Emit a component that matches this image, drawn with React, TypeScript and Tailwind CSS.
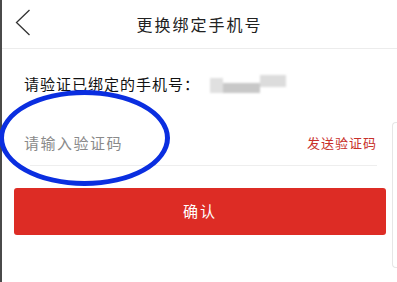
const FONT = { fontFamily: '"Noto Sans CJK SC", "Noto Sans", sans-serif' };

export default function App() {
	return (
		<div className="relative flex h-[282px] w-[397px] overflow-hidden bg-white" style={FONT}>
			<div className="w-[2px] shrink-0 bg-[#4a4a4a]" />
			<div className="relative flex flex-1 flex-col">
				<header className="relative flex h-[49px] items-center justify-center border-b border-[#ececec]">
					<svg className="absolute top-[9px] left-[13px]" width="16" height="28" viewBox="0 0 16 28" fill="none">
						<polyline points="14.5,1 1.5,13.5 14.5,26" stroke="#333" strokeWidth="1.3" />
					</svg>
					<span className="text-[16px] tracking-[2px] text-[#222]">更换绑定手机号</span>
				</header>

				<div className="mt-[24px] flex items-center pl-[22px]">
					<span className="text-[15px] tracking-[1px] text-[#111]">请验证已绑定的手机号：</span>
					<span className="ml-[10px] flex h-[19px] items-start blur-[1.2px]">
						<span className="mt-[3px] h-[15px] w-[13px] bg-[#e0e0e0]" />
						<span className="mt-[8px] h-[10px] w-[37px] bg-[#c8c8c8]" />
						<span className="h-[12px] w-[26px] bg-[#dcdcdc]" />
					</span>
				</div>

				<div className="mt-[36px] ml-[28px] mr-[20px] flex items-center justify-between border-b border-[#eeeeee] pb-[11px]">
					<span className="-ml-[6px] text-[15px] tracking-[1.5px] text-[#8a8a8a]">请输入验证码</span>
					<span className="text-[13px] tracking-[1px] text-[#c8302a]">发送验证码</span>
				</div>

				<button
					type="button"
					className="mt-[22px] ml-[12px] flex h-[47px] w-[372px] items-center justify-center rounded-[3px] bg-[#dd2c25] text-[15px] tracking-[2px] text-white"
				>
					确认
				</button>

				<div className="absolute top-[122px] right-0 bottom-[14px] w-[5px] rounded-l-[4px] border-y border-l border-[#e6e6e6]" />
			</div>

			<div className="pointer-events-none absolute top-[90px] left-[-1px] h-[96px] w-[171px] rounded-[50%] border-[5px] border-[#0a2ee0]" />
		</div>
	);
}
